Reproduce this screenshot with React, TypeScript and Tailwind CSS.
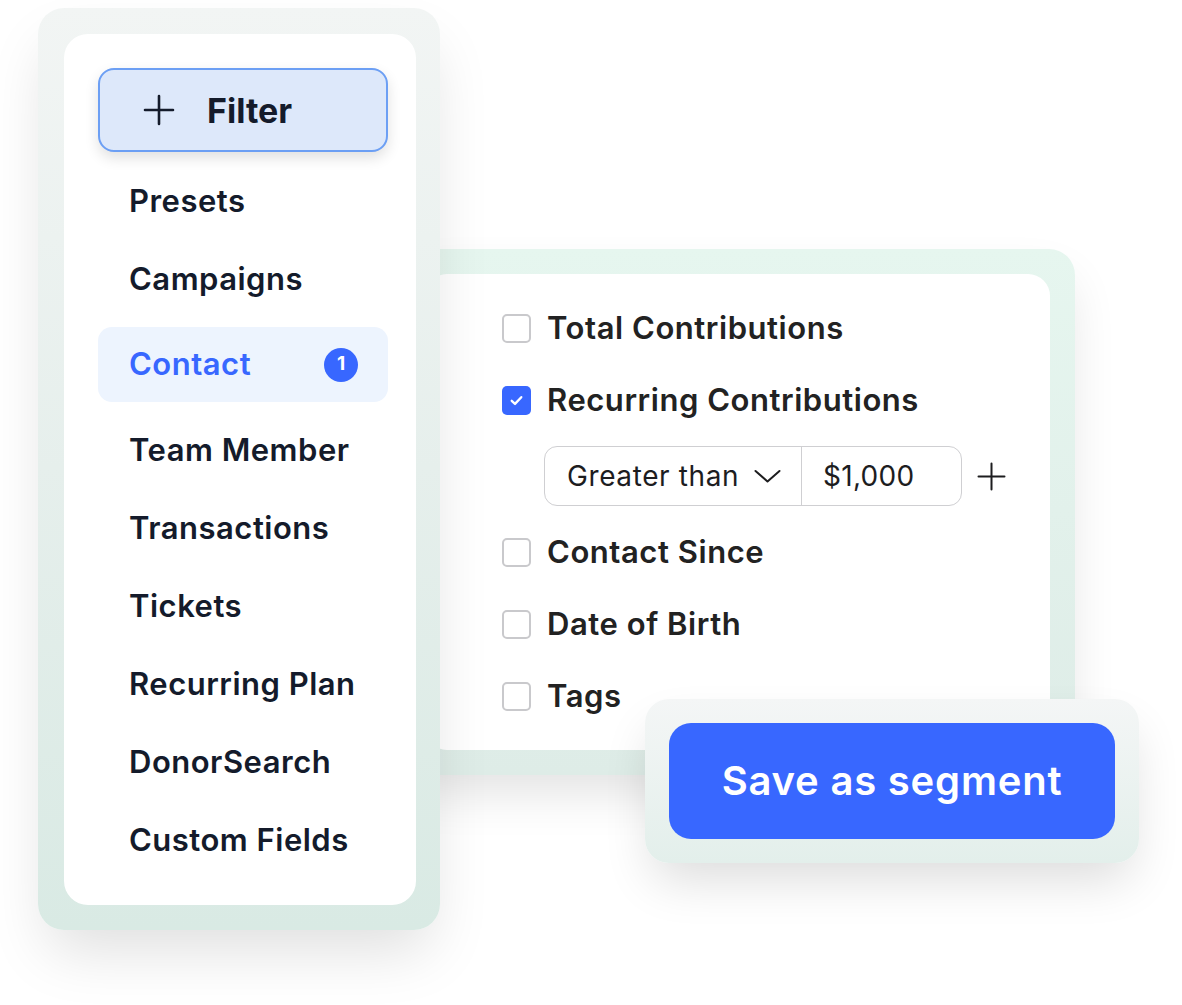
import React from "react";

function Check({ checked }: { checked?: boolean }) {
  if (checked) {
    return (
      <div className="w-[29px] h-[29px] rounded-[5px] bg-[#3867ff] flex items-center justify-center shrink-0">
        <svg width="17" height="17" viewBox="0 0 16 16" fill="none">
          <path d="M3.5 8.3 L6.6 11.2 L12.5 4.9" stroke="white" strokeWidth="2.2" strokeLinecap="round" strokeLinejoin="round" />
        </svg>
      </div>
    );
  }
  return <div className="w-[29px] h-[29px] rounded-[5px] border-2 border-[#c9c9cc] bg-white shrink-0" />;
}

function Row({ label, checked }: { label: string; checked?: boolean }) {
  return (
    <div className="h-[72px] flex items-center gap-[16px]">
      <Check checked={checked} />
      <span className="text-[31px] font-semibold text-[#222222] tracking-[0.55px]">{label}</span>
    </div>
  );
}

function MenuItem({ label }: { label: string }) {
  return (
    <div className="h-[78px] flex items-center pl-[31px] text-[31px] font-semibold text-[#141b2b] tracking-[0.5px]">
      {label}
    </div>
  );
}

export default function App() {
  return (
    <div className="relative w-[1182px] h-[1005px] bg-white overflow-hidden font-[family-name:Inter,sans-serif]">
      {/* Right panel */}
      <div className="absolute left-[400px] top-[249px] w-[675px] h-[526px] rounded-[26px] bg-gradient-to-b from-[#e6f6ef] to-[#deece7] p-[25px] shadow-[0_24px_50px_-8px_rgba(0,0,0,0.12)]">
        <div className="w-full h-full rounded-[22px] bg-white pl-[77px] pt-[18px]">
          <Row label="Total Contributions" />
          <Row label="Recurring Contributions" checked />
          <div className="h-[80px] flex items-center pl-[42px] gap-[15px]">
            <div className="h-[60px] w-[418px] rounded-[13px] border border-[#cfcfd2] flex">
              <div className="w-[257px] flex items-center pl-[22px] border-r border-[#cfcfd2]">
                <span className="text-[28px] text-[#1d1d1f] tracking-[0.6px]">Greater than</span>
                <svg className="ml-[15px]" width="27" height="16" viewBox="0 0 27 16" fill="none">
                  <path d="M1.5 3 L13.5 13.5 L25.5 3" stroke="#1d1d1f" strokeWidth="2" strokeLinecap="round" strokeLinejoin="round" />
                </svg>
              </div>
              <div className="flex-1 flex items-center pl-[21px]">
                <span className="text-[28px] text-[#1d1d1f] tracking-[0.3px]">$1,000</span>
              </div>
            </div>
            <svg width="29" height="29" viewBox="0 0 29 29" fill="none">
              <path d="M14.5 1.5 V27.5 M1.5 14.5 H27.5" stroke="#1d1d1f" strokeWidth="2" strokeLinecap="round" />
            </svg>
          </div>
          <Row label="Contact Since" />
          <Row label="Date of Birth" />
          <Row label="Tags" />
        </div>
      </div>

      {/* Left panel */}
      <div className="absolute left-[38px] top-[8px] w-[402px] h-[922px] rounded-[26px] bg-gradient-to-b from-[#f2f5f4] via-[#e6efec] to-[#d9eae4] pl-[26px] pr-[24px] pt-[26px] pb-[25px] shadow-[0_30px_60px_-10px_rgba(0,0,0,0.13)] z-10">
        <div className="w-full h-full rounded-[24px] bg-white pl-[34px] pr-[28px] pt-[34px] flex flex-col">
          <div className="h-[84px] rounded-[16px] border-2 border-[#6c9ff4] bg-[#dde8fa] flex items-center pl-[43px] shadow-[0_6px_14px_rgba(0,0,0,0.12)]">
            <svg width="32" height="32" viewBox="0 0 32 32" fill="none">
              <path d="M16 2 V30 M2 16 H30" stroke="#141b2b" strokeWidth="2.6" strokeLinecap="round" />
            </svg>
            <span className="ml-[32px] text-[34px] font-bold text-[#141b2b]">Filter</span>
          </div>
          <div className="mt-[10px] flex flex-col">
            <MenuItem label="Presets" />
            <MenuItem label="Campaigns" />
            <div className="h-[75px] my-[9px] rounded-[14px] bg-[#edf4fe] flex items-center justify-between pl-[31px] pr-[30px]">
              <span className="text-[31px] font-semibold text-[#3867ff] tracking-[0.5px]">Contact</span>
              <div className="w-[34px] h-[34px] rounded-full bg-[#3867ff] flex items-center justify-center text-white text-[19px] font-bold">1</div>
            </div>
            <MenuItem label="Team Member" />
            <MenuItem label="Transactions" />
            <MenuItem label="Tickets" />
            <MenuItem label="Recurring Plan" />
            <MenuItem label="DonorSearch" />
            <MenuItem label="Custom Fields" />
          </div>
        </div>
      </div>

      {/* Save button */}
      <div className="absolute left-[645px] top-[699px] w-[494px] h-[164px] rounded-[24px] bg-gradient-to-b from-[#f4f6f6] to-[#e3efeb] p-[24px] shadow-[0_24px_50px_-8px_rgba(0,0,0,0.14)] z-20">
        <div className="w-full h-full rounded-[22px] bg-[#3867ff] flex items-center justify-center">
          <span className="text-[40px] font-semibold text-white tracking-[0.8px]">Save as segment</span>
        </div>
      </div>
    </div>
  );
}
